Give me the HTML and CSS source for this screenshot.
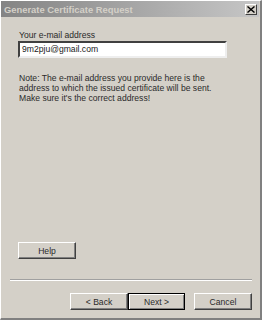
FILE: index.html
```html
<!DOCTYPE html>
<html>
<head>
<meta charset="utf-8">
<link rel="stylesheet" href="styles.css">
</head>
<body>
<div class="window">
  <div class="titlebar">
    <span class="title">Generate Certificate Request</span>
    <span class="close"><svg width="8" height="7" viewBox="0 0 8 7"><path d="M0.5 0.5 L7.5 6.5 M7.5 0.5 L0.5 6.5" stroke="#000" stroke-width="1.4" fill="none"/></svg></span>
  </div>
  <div class="content">
    <div class="label">Your e-mail address</div>
    <div class="input">9m2pju@gmail.com</div>
    <div class="note">Note: The e-mail address you provide here is the<br>address to which the issued certificate will be sent.<br>Make sure it's the correct address!</div>
    <div class="spacer"></div>
    <div class="btn help">Help</div>
  </div>
  <div class="separator"></div>
  <div class="actions">
    <div class="btn">&lt; Back</div>
    <div class="btn default">Next &gt;</div>
    <div class="btn cancel">Cancel</div>
  </div>
</div>
</body>
</html>
```
FILE: styles.css
```css
html, body {
  margin: 0;
  padding: 0;
  background: #d4d0c8;
}
.window {
  width: 262px;
  height: 320px;
  box-sizing: border-box;
  background: #d4d0c8;
  border-left: 1px solid #ffffff;
  border-top: 1px solid #ffffff;
  border-right: 2px solid #808080;
  border-bottom: 2px solid #808080;
  display: flex;
  flex-direction: column;
  font-family: "Liberation Sans", Arial, sans-serif;
  font-size: 8.6px;
  color: #2a2a2a;
}
.titlebar {
  height: 16px;
  margin: 0 1px 0 0;
  background: linear-gradient(to right, #848484, #c6c6c6);
  display: flex;
  align-items: center;
  justify-content: space-between;
  padding: 0 2px 0 3px;
}
.title {
  font-weight: bold;
  font-size: 9.4px;
  color: #d4d0c8;
}
.close {
  width: 12px;
  height: 11px;
  box-sizing: border-box;
  background: #d4d0c8;
  border-top: 1px solid #fff;
  border-left: 1px solid #fff;
  border-right: 1px solid #404040;
  border-bottom: 1px solid #404040;
  display: flex;
  align-items: center;
  justify-content: center;
}
.content {
  flex: 1;
  display: flex;
  flex-direction: column;
  padding: 13px 0 0 17px;
}
.label {
  line-height: 11px;
  padding-left: 1px;
}
.input {
  width: 209px;
  height: 17px;
  box-sizing: border-box;
  background: #fff;
  border-top: 2px solid #404040;
  border-left: 2px solid #404040;
  border-right: 2px solid #eeeeee;
  border-bottom: 2px solid #eeeeee;
  line-height: 13px;
  padding-left: 2px;
  color: #1a1a1a;
}
.note {
  margin-top: 15px;
  line-height: 10px;
  padding-left: 1px;
}
.spacer {
  flex: 1;
}
.btn {
  width: 58px;
  height: 17px;
  box-sizing: border-box;
  border-top: 1px solid #fff;
  border-left: 1px solid #fff;
  border-right: 1px solid #404040;
  border-bottom: 1px solid #404040;
  box-shadow: inset -1px -1px 0 #808080;
  display: flex;
  align-items: center;
  justify-content: center;
  color: #2a2a2a;
}
.help {
  margin-bottom: 20px;
}
.separator {
  height: 0;
  margin: 0 8px 0 9px;
  border-top: 1px solid #a0a0a0;
  border-bottom: 1px solid #fff;
}
.actions {
  display: flex;
  padding: 12px 8px 8px 69px;
}
.default {
  border: 1px solid #000;
  box-shadow: inset 1px 1px 0 #fff, inset -1px -1px 0 #808080;
  width: 57px;
}
.cancel {
  margin-left: 9px;
}
```
